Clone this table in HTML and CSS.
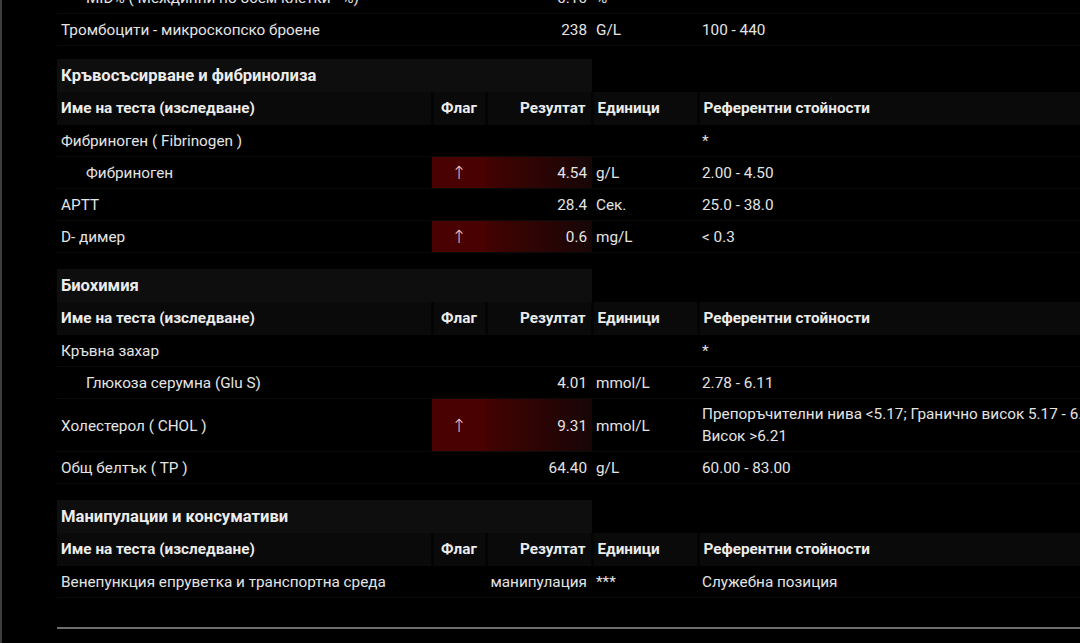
FILE: index.html
```html
<!DOCTYPE html>
<html lang="bg">
<head>
<meta charset="utf-8">
<title>Резултати</title>
<link rel="stylesheet" href="styles.css">
</head>
<body>
<div class="page">
  <table class="lab first">
    <colgroup><col class="c-name"><col class="c-flag"><col class="c-res"><col class="c-unit"><col class="c-ref"></colgroup>
    <tbody>
      <tr><td class="name sub">MID% ( Междинни по обем клетки - %)</td><td class="flag"></td><td class="res">0.10</td><td class="unit">%</td><td class="ref"></td></tr>
      <tr><td class="name">Тромбоцити - микроскопско броене</td><td class="flag"></td><td class="res">238</td><td class="unit">G/L</td><td class="ref">100 - 440</td></tr>
    </tbody>
  </table>

  <table class="lab">
    <colgroup><col class="c-name"><col class="c-flag"><col class="c-res"><col class="c-unit"><col class="c-ref"></colgroup>
    <thead>
      <tr class="section"><th colspan="3" class="sec-title">Кръвосъсирване и фибринолиза</th><th></th><th></th></tr>
      <tr class="cols"><th class="name">Име на теста (изследване)</th><th class="flag">Флаг</th><th class="res">Резултат</th><th class="unit">Единици</th><th class="ref">Референтни стойности</th></tr>
    </thead>
    <tbody>
      <tr><td class="name">Фибриноген ( Fibrinogen )</td><td class="flag"></td><td class="res"></td><td class="unit"></td><td class="ref">*</td></tr>
      <tr class="high"><td class="name sub">Фибриноген</td><td class="flag">↑</td><td class="res">4.54</td><td class="unit">g/L</td><td class="ref">2.00 - 4.50</td></tr>
      <tr><td class="name">APTT</td><td class="flag"></td><td class="res">28.4</td><td class="unit">Сек.</td><td class="ref">25.0 - 38.0</td></tr>
      <tr class="high"><td class="name">D- димер</td><td class="flag">↑</td><td class="res">0.6</td><td class="unit">mg/L</td><td class="ref">&lt; 0.3</td></tr>
    </tbody>
  </table>

  <table class="lab">
    <colgroup><col class="c-name"><col class="c-flag"><col class="c-res"><col class="c-unit"><col class="c-ref"></colgroup>
    <thead>
      <tr class="section"><th colspan="3" class="sec-title">Биохимия</th><th></th><th></th></tr>
      <tr class="cols"><th class="name">Име на теста (изследване)</th><th class="flag">Флаг</th><th class="res">Резултат</th><th class="unit">Единици</th><th class="ref">Референтни стойности</th></tr>
    </thead>
    <tbody>
      <tr><td class="name">Кръвна захар</td><td class="flag"></td><td class="res"></td><td class="unit"></td><td class="ref">*</td></tr>
      <tr><td class="name sub">Глюкоза серумна (Glu S)</td><td class="flag"></td><td class="res">4.01</td><td class="unit">mmol/L</td><td class="ref">2.78 - 6.11</td></tr>
      <tr class="high"><td class="name">Холестерол ( CHOL )</td><td class="flag">↑</td><td class="res">9.31</td><td class="unit">mmol/L</td><td class="ref">Препоръчителни нива &lt;5.17; Гранично висок 5.17 - 6.21;<br>Висок &gt;6.21</td></tr>
      <tr><td class="name">Общ белтък ( TP )</td><td class="flag"></td><td class="res">64.40</td><td class="unit">g/L</td><td class="ref">60.00 - 83.00</td></tr>
    </tbody>
  </table>

  <table class="lab">
    <colgroup><col class="c-name"><col class="c-flag"><col class="c-res"><col class="c-unit"><col class="c-ref"></colgroup>
    <thead>
      <tr class="section"><th colspan="3" class="sec-title">Манипулации и консумативи</th><th></th><th></th></tr>
      <tr class="cols"><th class="name">Име на теста (изследване)</th><th class="flag">Флаг</th><th class="res">Резултат</th><th class="unit">Единици</th><th class="ref">Референтни стойности</th></tr>
    </thead>
    <tbody>
      <tr><td class="name">Венепункция епруветка и транспортна среда</td><td class="flag"></td><td class="res">манипулация</td><td class="unit">***</td><td class="ref">Служебна позиция</td></tr>
    </tbody>
  </table>

  <div class="rule"></div>
</div>
</body>
</html>
```

FILE: styles.css
```css
html, body {
  margin: 0;
  padding: 0;
  background: #000;
  height: 100%;
  overflow: hidden;
}
body {
  border-left: 2px solid #3c3c3c;
  box-sizing: border-box;
  font-family: Roboto, "Noto Sans", "Liberation Sans", sans-serif;
  color: #e4e4e4;
}
.page {
  padding-left: 55px;
  width: 1160px;
}
.lab {
  border-collapse: collapse;
  table-layout: fixed;
  width: 1060px;
  margin-top: 16px;
  font-size: 15.3px;
  line-height: 20px;
}
.lab.first {
  margin-top: -18px;
  margin-bottom: -3px;
}
.c-name { width: 375px; }
.c-flag { width: 54px; }
.c-res { width: 106px; }
.c-unit { width: 106px; }
.c-ref { width: 419px; }

.lab td, .lab th {
  padding: 6px 4px 5px;
  white-space: nowrap;
  vertical-align: middle;
  text-align: left;
  border-bottom: 1px solid #0b0b0b;
}
.lab td.ref {
  white-space: normal;
  line-height: 22px;
  padding-top: 4px;
  padding-bottom: 4px;
}
.lab td.res, .lab th.res { text-align: right; padding-right: 5px; }
.lab .flag { text-align: center; }
.lab .sub { padding-left: 29px; }

.section th {
  font-weight: 700;
  font-size: 16.6px;
  color: #ececec;
  border-bottom: none;
  padding-top: 7px;
  padding-bottom: 6px;
}
.section .sec-title {
  background: #0e0e0e;
}
.cols th {
  font-weight: 700;
  color: #ececec;
  background: #0a0a0a;
  border-left: 3px solid #040404;
  padding-top: 6px;
  padding-bottom: 6px;
}
.cols th.name { border-left: none; }

.high td.flag {
  background: #4a0101;
  color: #f1cccc;
  font-family: "DejaVu Sans", Roboto, sans-serif;
  font-size: 18px;
  font-weight: 300;
}
.high td.res {
  background: linear-gradient(to right, #420202, #170606);
}

.rule {
  margin-top: 29px;
  height: 2px;
  background: #6e6e6e;
  width: 1100px;
}
```
